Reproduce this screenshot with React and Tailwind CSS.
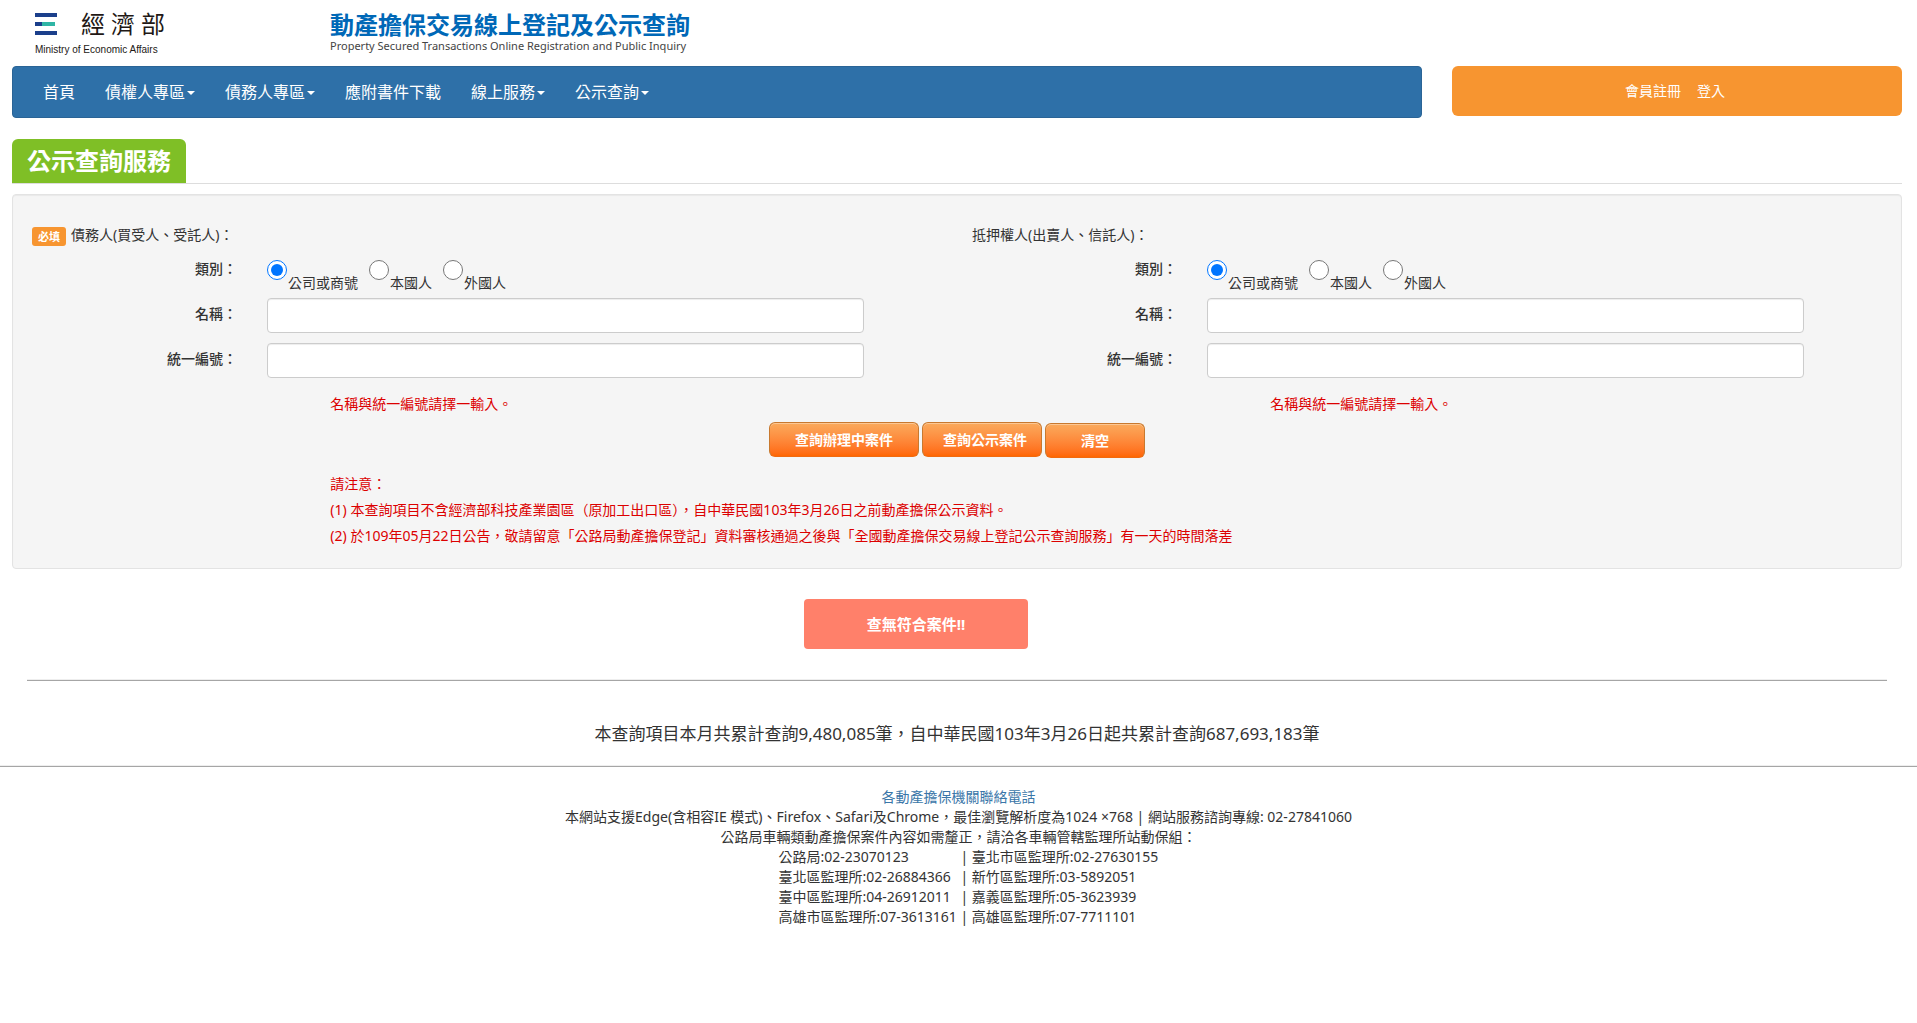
const navItems = [
  { label: '首頁' },
  { label: '債權人專區', menu: true },
  { label: '債務人專區', menu: true },
  { label: '應附書件下載' },
  { label: '線上服務', menu: true },
  { label: '公示查詢', menu: true },
];

const kinds = ['公司或商號', '本國人', '外國人'];

const offices = [
  ['公路局:02-23070123', '臺北市區監理所:02-27630155'],
  ['臺北區監理所:02-26884366', '新竹區監理所:03-5892051'],
  ['臺中區監理所:04-26912011', '嘉義區監理所:05-3623939'],
  ['高雄市區監理所:07-3613161', '高雄區監理所:07-7711101'],
];

function MinistryLogo() {
  return (
    <a href="#" className="flex w-[295px] flex-col text-[#221815]">
      <span className="flex items-center">
        <svg width="22" height="22" viewBox="0 0 22 22" aria-hidden="true">
          <rect width="22" height="4" fill="#1b3f8b" />
          <rect y="9" width="7" height="4" fill="#1b3f8b" />
          <rect x="7" y="9" width="13" height="4" fill="#2fb5a5" />
          <rect y="18" width="22" height="4" fill="#1b3f8b" />
        </svg>
        <span className="ml-6 flex gap-1.5 text-2xl leading-8 font-normal">
          <span>經</span>
          <span>濟</span>
          <span>部</span>
        </span>
      </span>
      <span className="mt-1 font-['Liberation_Sans',sans-serif] text-[10px] leading-3">
        Ministry of Economic Affairs
      </span>
    </a>
  );
}

function Field({ id, label }) {
  return (
    <div className="mb-2.5 grid grid-cols-12">
      <label htmlFor={id} className="col-span-3 pt-1.5 pr-[15px] text-right font-medium">
        {label}
      </label>
      <div className="col-span-8 px-[15px]">
        <input
          id={id}
          type="text"
          className="block h-[35px] w-full rounded border border-[#ccc] bg-white px-3 shadow-[inset_0_1px_1px_rgba(0,0,0,0.075)]"
        />
      </div>
    </div>
  );
}

function PartyForm({ name, title, required }) {
  return (
    <fieldset>
      <legend className="mb-3.5 flex h-[31px] items-start pt-[11px] pl-[15px]">
        {required && (
          <span className="mt-0.5 mr-[5px] w-[34px] rounded-[3px] bg-[#f79530] text-center text-[11px] leading-[19px] font-bold text-white">
            必填
          </span>
        )}
        {title}
      </legend>
      <div className="mb-[5px] grid grid-cols-12" role="radiogroup" aria-label="類別">
        <span className="col-span-3 pr-[15px] text-right font-medium">類別：</span>
        <div className="col-span-8 flex gap-[11px] px-[15px]">
          {kinds.map((kind, i) => (
            <label key={kind} className="flex gap-px">
              <input
                type="radio"
                name={name + '-kind'}
                defaultChecked={i === 0}
                className="mt-px size-5 accent-[#0075ff]"
              />
              <span className="pt-[14px]">{kind}</span>
            </label>
          ))}
        </div>
      </div>
      <Field id={name + '-name'} label="名稱：" />
      <Field id={name + '-id'} label="統一編號：" />
      <div className="grid grid-cols-12">
        <p className="col-span-8 col-start-5 pt-1.5 text-[#dc0000]">名稱與統一編號請擇一輸入。</p>
      </div>
    </fieldset>
  );
}

const actionButton =
  'h-[35px] rounded-md border border-[#c8792f] border-b-[#f06a10] bg-linear-to-b from-[#faaa5c] to-[#ff6600] font-bold text-white shadow-[inset_0_1px_0_rgba(255,255,255,0.35)]';

function Divider({ className }) {
  return <hr className={'h-0.5 border-t border-b border-t-[#eee] border-b-[#a6a6a6] ' + className} />;
}

export default function App() {
  return (
    <div className="bg-white font-['Noto_Sans','Noto_Sans_CJK_TC',sans-serif] text-sm leading-5 text-[#333]">
      <header className="mx-3 flex h-[66px] items-start pt-2 pl-[23px]">
        <MinistryLogo />
        <div className="flex flex-col pt-px">
          <span className="text-2xl leading-[31px] font-bold text-[#0068b7]">動產擔保交易線上登記及公示查詢</span>
          <span className="text-[11px] leading-3 font-normal text-[#444]">
            Property Secured Transactions Online Registration and Public Inquiry
          </span>
        </div>
      </header>

      <div className="mr-[15px] ml-3 flex items-start gap-[30px]">
        <nav className="flex h-[52px] flex-1 items-center rounded border border-[#2a6496] bg-[#2e70a8] pl-[15px]">
          {navItems.map((item) => (
            <a key={item.label} href="#" className="flex items-center px-[15px] text-base text-white">
              {item.label}
              {item.menu && (
                <span className="mt-0.5 ml-0.5 border-x-4 border-t-4 border-x-transparent border-t-white" />
              )}
            </a>
          ))}
        </nav>
        <div className="flex h-[50px] w-[450px] items-center justify-center gap-4 rounded-md bg-[#f79530] pr-1 text-white">
          <a href="#">會員註冊</a>
          <a href="#">登入</a>
        </div>
      </div>

      <main className="mr-[15px] ml-3">
        <div className="mt-[21px] border-b border-[#ddd]">
          <h1 className="inline-block h-11 rounded-t-md bg-[#7fbf26] px-[15px] align-top text-2xl leading-[44px] font-bold text-white">
            公示查詢服務
          </h1>
        </div>

        <form
          className="mt-2.5 rounded border border-[#e3e3e3] bg-[#f5f5f5] px-1 pt-[19px] pb-[19px] shadow-[inset_0_1px_1px_rgba(0,0,0,0.05)]"
          onSubmit={(e) => e.preventDefault()}
        >
          <div className="grid grid-cols-2">
            <PartyForm name="debtor" title="債務人(買受人、受託人)：" required />
            <PartyForm name="mortgagee" title="抵押權人(出賣人、信託人)：" />
          </div>
          <div className="mt-2 flex justify-center gap-[3px]">
            <button type="submit" className={actionButton + ' w-[150px]'}>查詢辦理中案件</button>
            <button type="submit" className={actionButton + ' w-[120px] pl-1.5'}>查詢公示案件</button>
            <button type="reset" className={actionButton + ' mt-px w-[100px]'}>清空</button>
          </div>
          <div className="mt-[13px] grid grid-cols-12 leading-[26px] text-[#dc0000]">
            <div className="col-span-10 col-start-3">
              <p>請注意：</p>
              <p>(1) 本查詢項目不含經濟部科技產業園區（原加工出口區），自中華民國103年3月26日之前動產擔保公示資料。</p>
              <p>(2) 於109年05月22日公告，敬請留意「公路局動產擔保登記」資料審核通過之後與「全國動產擔保交易線上登記公示查詢服務」有一天的時間落差</p>
            </div>
          </div>
        </form>

        <div className="mt-[30px] mr-[82px] flex justify-center">
          <p className="h-[50px] w-56 rounded bg-[#ff806a] text-center text-[15px] leading-[50px] font-bold text-white">
            查無符合案件!!
          </p>
        </div>

        <Divider className="mx-[15px] mt-[30px]" />
        <p className="pt-[41px] text-center text-[17px] leading-6">
          本查詢項目本月共累計查詢9,480,085筆，自中華民國103年3月26日起共累計查詢687,693,183筆
        </p>
      </main>

      <footer className="mt-[19px] text-center">
        <Divider className="mb-5" />
        <p>
          <a href="#" className="text-[#3a76a8]">各動產擔保機關聯絡電話</a>
        </p>
        <p>本網站支援Edge(含相容IE 模式)、Firefox、Safari及Chrome，最佳瀏覽解析度為1024 ×768 | 網站服務諮詢專線: 02-27841060</p>
        <p>公路局車輛類動產擔保案件內容如需釐正，請洽各車輛管轄監理所站動保組：</p>
        <ul className="mx-auto w-[360px] text-left whitespace-nowrap">
          {offices.map(([left, right]) => (
            <li key={left} className="flex">
              <span className="w-[182px] shrink-0">{left}</span>
              <span>| {right}</span>
            </li>
          ))}
        </ul>
      </footer>
    </div>
  );
}
